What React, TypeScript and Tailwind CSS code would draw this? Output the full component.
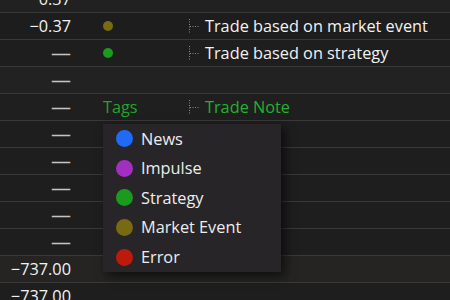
import React from "react";

type Row = {
  num: string;
  dash?: boolean;
  dot?: string;
  tag?: string;
  note?: string;
  noteGreen?: boolean;
  bg: string;
};

const rows: Row[] = [
  { num: "0.37", bg: "bg-[#212121]" },
  { num: "−0.37", dot: "bg-[#7a6a12]", note: "Trade based on market event", bg: "bg-[#1d1d1d]" },
  { num: "—", dash: true, dot: "bg-[#1b9a1f]", note: "Trade based on strategy", bg: "bg-[#1e1e1e]" },
  { num: "—", dash: true, bg: "bg-[#222222]" },
  { num: "—", dash: true, tag: "Tags", note: "Trade Note", noteGreen: true, bg: "bg-[#1f1f1f]" },
  { num: "—", dash: true, bg: "bg-[#1e1e1e]" },
  { num: "—", dash: true, bg: "bg-[#1e1e1e]" },
  { num: "—", dash: true, bg: "bg-[#1e1e1e]" },
  { num: "—", dash: true, bg: "bg-[#1e1e1e]" },
  { num: "—", dash: true, bg: "bg-[#1e1e1e]" },
  { num: "−737.00", bg: "bg-[#252423]" },
  { num: "−737.00", bg: "bg-[#1e1e1e]" },
];

const menu = [
  { label: "News", color: "bg-[#1f6af8]" },
  { label: "Impulse", color: "bg-[#a32fc2]" },
  { label: "Strategy", color: "bg-[#1a9a1e]" },
  { label: "Market Event", color: "bg-[#776a12]" },
  { label: "Error", color: "bg-[#bd1a0e]" },
];

function Connector() {
  return (
    <svg width="14" height="14" viewBox="0 0 14 14" className="shrink-0">
      <line x1="1.5" y1="0" x2="1.5" y2="14" stroke="#8a8a8a" strokeWidth="1" strokeDasharray="1 1.5" />
      <line x1="2" y1="7.5" x2="11" y2="7.5" stroke="#8a8a8a" strokeWidth="1" strokeDasharray="1 1.5" />
    </svg>
  );
}

export default function App() {
  return (
    <div
      className="relative w-[450px] h-[300px] overflow-hidden bg-[#1e1e1e] text-[16.3px] text-[#f2f2f2]"
      style={{ fontFamily: '"Open Sans", "Noto Sans", sans-serif' }}
    >
      <div className="-mt-[14px] flex flex-col">
        {rows.map((r, i) => (
          <div
            key={i}
            className={`flex items-center h-[27px] shrink-0 border-b border-[#393939] ${r.bg}`}
          >
            <div
              className={`w-[71px] shrink-0 text-right leading-none ${r.dash ? "text-[20px] text-[#c4c4c4]" : "text-[#f2f2f2]"}`}
            >
              {r.num}
            </div>
            <div className="ml-[32px] w-[85px] shrink-0 flex items-center">
              {r.dot && <span className={`block w-[10px] h-[10px] rounded-full ${r.dot}`} />}
              {r.tag && <span className="text-[#1fa62a] leading-none">{r.tag}</span>}
            </div>
            {r.note && (
              <div className="flex items-center">
                <Connector />
                <span className={`ml-[3px] leading-none ${r.noteGreen ? "text-[#22b22b]" : "text-[#f2f2f2]"}`}>
                  {r.note}
                </span>
              </div>
            )}
          </div>
        ))}
      </div>

      <div className="absolute left-[103px] top-[124px] w-[178px] bg-[#272527] shadow-[4px_4px_10px_rgba(0,0,0,0.6)] flex flex-col">
        {menu.map((m) => (
          <div key={m.label} className="h-[29.6px] flex items-center pl-[13px]">
            <span className={`block w-[17px] h-[17px] rounded-full ${m.color}`} />
            <span className="ml-[8px] leading-none text-[#ededed]">{m.label}</span>
          </div>
        ))}
      </div>
    </div>
  );
}
